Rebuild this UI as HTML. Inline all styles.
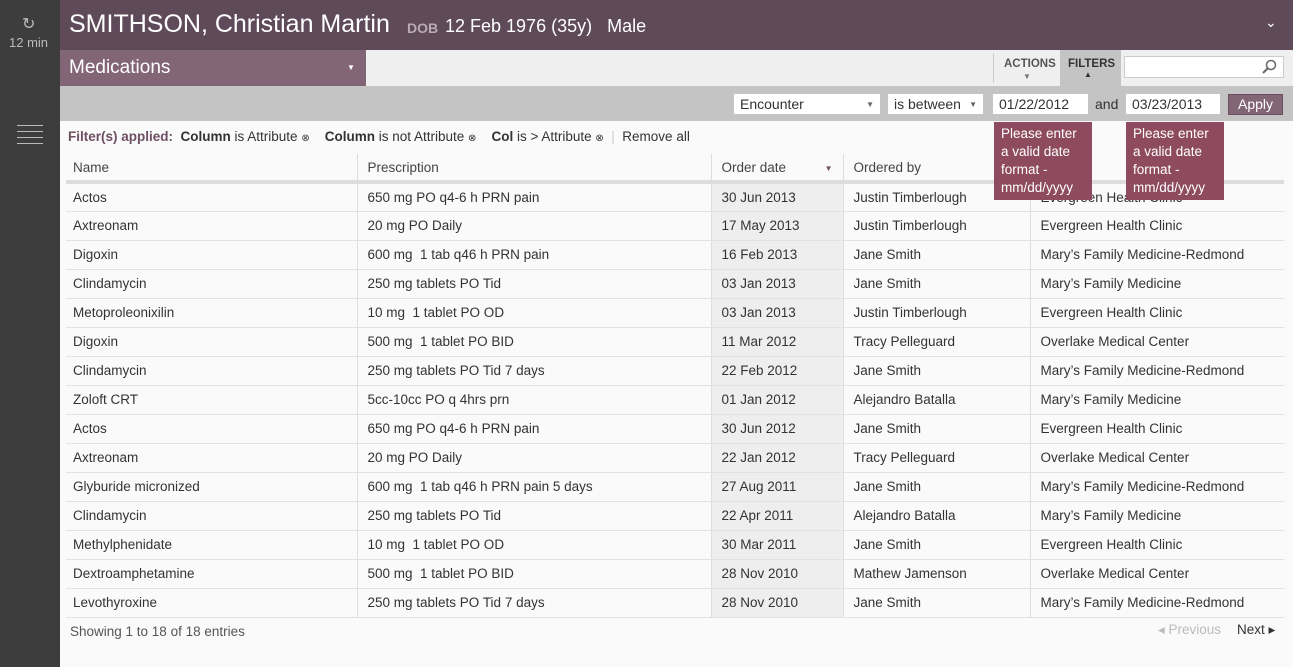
<!DOCTYPE html>
<html><head><style>
*{box-sizing:border-box;margin:0;padding:0}
body{width:1293px;height:667px;overflow:hidden;font-family:"Liberation Sans",sans-serif;background:#fafafa;position:relative;color:#333}
.abs{position:absolute}
.side{left:0;top:0;width:60px;height:667px;background:#3d3d3d}
.top{left:60px;top:0;width:1233px;height:50px;background:#5f4a5a;color:#fff}
.tb{left:60px;top:50px;width:1233px;height:36px;background:#efefef}
.med{left:60px;top:50px;width:306px;height:36px;background:#836578;color:#fff;font-size:19px;padding:7px 0 0 9px}
.fr{left:60px;top:86px;width:1233px;height:35px;background:#c4c4c4}
.sel{background:#fff;height:20px;font-size:14px;padding:2px 6px;color:#333}
.tip{background:#8e4a5e;color:#fff;font-size:13.5px;line-height:18px;padding:3px 7px;width:98px}
table{position:absolute;left:66px;top:154px;width:1218px;border-collapse:collapse;font-size:13.5px}
td{height:29px;padding:0 10px;border-bottom:1px solid #e2e2e2;border-right:1px solid #ddd}
td:first-child{padding-left:7px}
td:nth-child(3){background:#eeeeee;width:132px}
td:last-child{border-right:none}
th{font-weight:normal;text-align:left;height:28px;padding:0 10px;border-right:1px solid #ddd;border-bottom:4px solid #ddd;color:#444}
th:last-child{border-right:none}
</style></head><body>
<div class="abs side">
<div class="abs" style="left:22px;top:14px;color:#bbb;font-size:16px">&#x21bb;</div>
<div class="abs" style="left:9px;top:35px;color:#bbb;font-size:13px">12 min</div>
<div class="abs" style="left:17px;top:125px;width:26px">
<div style="height:1px;background:#bbb;margin-bottom:5px"></div><div style="height:1px;background:#bbb;margin-bottom:5px"></div><div style="height:1px;background:#bbb;margin-bottom:5px"></div><div style="height:1px;background:#bbb"></div></div>
</div>
<div class="abs top">
<span class="abs" style="left:9px;top:10px;font-size:25px">SMITHSON, Christian Martin</span>
<span class="abs" style="left:347px;top:20px;font-size:14px;color:#bbaab6;font-weight:bold">DOB</span>
<span class="abs" style="left:385px;top:16px;font-size:18px">12 Feb 1976 (35y) &nbsp;&nbsp;Male</span>
<span class="abs" style="left:1205px;top:14px;font-size:14px">&#x2304;</span>
</div>
<div class="abs tb">
<div class="abs" style="left:933px;top:3px;width:1px;height:30px;background:#ccc"></div>
<div class="abs" style="left:944px;top:8px;font-size:11.5px;font-weight:bold;color:#555">ACTIONS</div>
<div class="abs" style="left:963px;top:22px;font-size:8px;color:#777">&#9660;</div>
<div class="abs" style="left:1000px;top:0;width:61px;height:36px;background:#c4c4c4"></div>
<div class="abs" style="left:1008px;top:8px;font-size:11.5px;font-weight:bold;color:#333">FILTERS</div>
<div class="abs" style="left:1024px;top:20px;font-size:8px;color:#333">&#9650;</div>
<div class="abs" style="left:1064px;top:6px;width:160px;height:22px;background:#fff;border:1px solid #ccc"></div>
<svg class="abs" style="left:1201px;top:9px" width="16" height="16" viewBox="0 0 16 16"><circle cx="10" cy="6" r="4.5" fill="none" stroke="#666" stroke-width="1.5"/><line x1="7" y1="9" x2="2" y2="14" stroke="#666" stroke-width="2"/></svg>
</div>
<div class="abs med">Medications<span class="abs" style="left:287px;top:13px;font-size:8px">&#9660;</span></div>
<div class="abs fr">
<div class="abs sel" style="left:674px;top:8px;width:146px">Encounter<span style="float:right;font-size:8px;margin-top:4px;color:#666">&#9660;</span></div>
<div class="abs sel" style="left:828px;top:8px;width:95px">is between<span style="float:right;font-size:8px;margin-top:4px;color:#666">&#9660;</span></div>
<div class="abs sel" style="left:933px;top:8px;width:95px">01/22/2012</div>
<div class="abs" style="left:1035px;top:10px;font-size:14px">and</div>
<div class="abs sel" style="left:1066px;top:8px;width:94px">03/23/2013</div>
<div class="abs" style="left:1168px;top:8px;width:55px;height:21px;background:#836578;border:1px solid #6b4f61;color:#fff;font-size:14px;text-align:center;padding-top:1px">Apply</div>
</div>
<div class="abs" style="left:68px;top:129px;font-size:13.5px;white-space:nowrap"><b style="color:#6d4f62">Filter(s) applied:</b>&nbsp; <b>Column</b> is Attribute <span style="font-size:10px">&#x2297;</span>&nbsp;&nbsp;&nbsp; <b>Column</b> is not Attribute <span style="font-size:10px">&#x2297;</span>&nbsp;&nbsp;&nbsp; <b>Col</b> is &gt; Attribute <span style="font-size:10px">&#x2297;</span> &nbsp;<span style="color:#ccc">|</span>&nbsp; Remove all</div>
<table>
<tr><th style="width:291px;padding-left:7px">Name</th><th style="width:354px">Prescription</th><th style="width:132px">Order date<span style="float:right;font-size:8px;color:#6d4f62;margin-top:4px">&#9660;</span></th><th style="width:187px">Ordered by</th><th></th></tr>
<tr><td>Actos</td><td>650 mg PO q4-6 h PRN pain</td><td>30 Jun 2013</td><td>Justin Timberlough</td><td>Evergreen Health Clinic</td></tr>
<tr><td>Axtreonam</td><td>20 mg PO Daily</td><td>17 May 2013</td><td>Justin Timberlough</td><td>Evergreen Health Clinic</td></tr>
<tr><td>Digoxin</td><td>600 mg&nbsp; 1 tab q46 h PRN pain</td><td>16 Feb 2013</td><td>Jane Smith</td><td>Mary’s Family Medicine-Redmond</td></tr>
<tr><td>Clindamycin</td><td>250 mg tablets PO Tid</td><td>03 Jan 2013</td><td>Jane Smith</td><td>Mary’s Family Medicine</td></tr>
<tr><td>Metoproleonixilin</td><td>10 mg&nbsp; 1 tablet PO OD</td><td>03 Jan 2013</td><td>Justin Timberlough</td><td>Evergreen Health Clinic</td></tr>
<tr><td>Digoxin</td><td>500 mg&nbsp; 1 tablet PO BID</td><td>11 Mar 2012</td><td>Tracy Pelleguard</td><td>Overlake Medical Center</td></tr>
<tr><td>Clindamycin</td><td>250 mg tablets PO Tid 7 days</td><td>22 Feb 2012</td><td>Jane Smith</td><td>Mary’s Family Medicine-Redmond</td></tr>
<tr><td>Zoloft CRT</td><td>5cc-10cc PO q 4hrs prn</td><td>01 Jan 2012</td><td>Alejandro Batalla</td><td>Mary’s Family Medicine</td></tr>
<tr><td>Actos</td><td>650 mg PO q4-6 h PRN pain</td><td>30 Jun 2012</td><td>Jane Smith</td><td>Evergreen Health Clinic</td></tr>
<tr><td>Axtreonam</td><td>20 mg PO Daily</td><td>22 Jan 2012</td><td>Tracy Pelleguard</td><td>Overlake Medical Center</td></tr>
<tr><td>Glyburide micronized</td><td>600 mg&nbsp; 1 tab q46 h PRN pain 5 days</td><td>27 Aug 2011</td><td>Jane Smith</td><td>Mary’s Family Medicine-Redmond</td></tr>
<tr><td>Clindamycin</td><td>250 mg tablets PO Tid</td><td>22 Apr 2011</td><td>Alejandro Batalla</td><td>Mary’s Family Medicine</td></tr>
<tr><td>Methylphenidate</td><td>10 mg&nbsp; 1 tablet PO OD</td><td>30 Mar 2011</td><td>Jane Smith</td><td>Evergreen Health Clinic</td></tr>
<tr><td>Dextroamphetamine</td><td>500 mg&nbsp; 1 tablet PO BID</td><td>28 Nov 2010</td><td>Mathew Jamenson</td><td>Overlake Medical Center</td></tr>
<tr><td>Levothyroxine</td><td>250 mg tablets PO Tid 7 days</td><td>28 Nov 2010</td><td>Jane Smith</td><td>Mary’s Family Medicine-Redmond</td></tr>
</table>
<div class="abs tip" style="left:994px;top:122px">Please enter a valid date format - mm/dd/yyyy</div>
<div class="abs tip" style="left:1126px;top:122px">Please enter a valid date format - mm/dd/yyyy</div>
<div class="abs" style="left:70px;top:624px;font-size:13.5px;color:#555">Showing 1 to 18 of 18 entries</div>
<div class="abs" style="left:1158px;top:622px;font-size:13.5px;color:#bbb">&#9666; Previous</div>
<div class="abs" style="left:1237px;top:622px;font-size:13.5px;color:#333">Next &#9656;</div>
</body></html>
